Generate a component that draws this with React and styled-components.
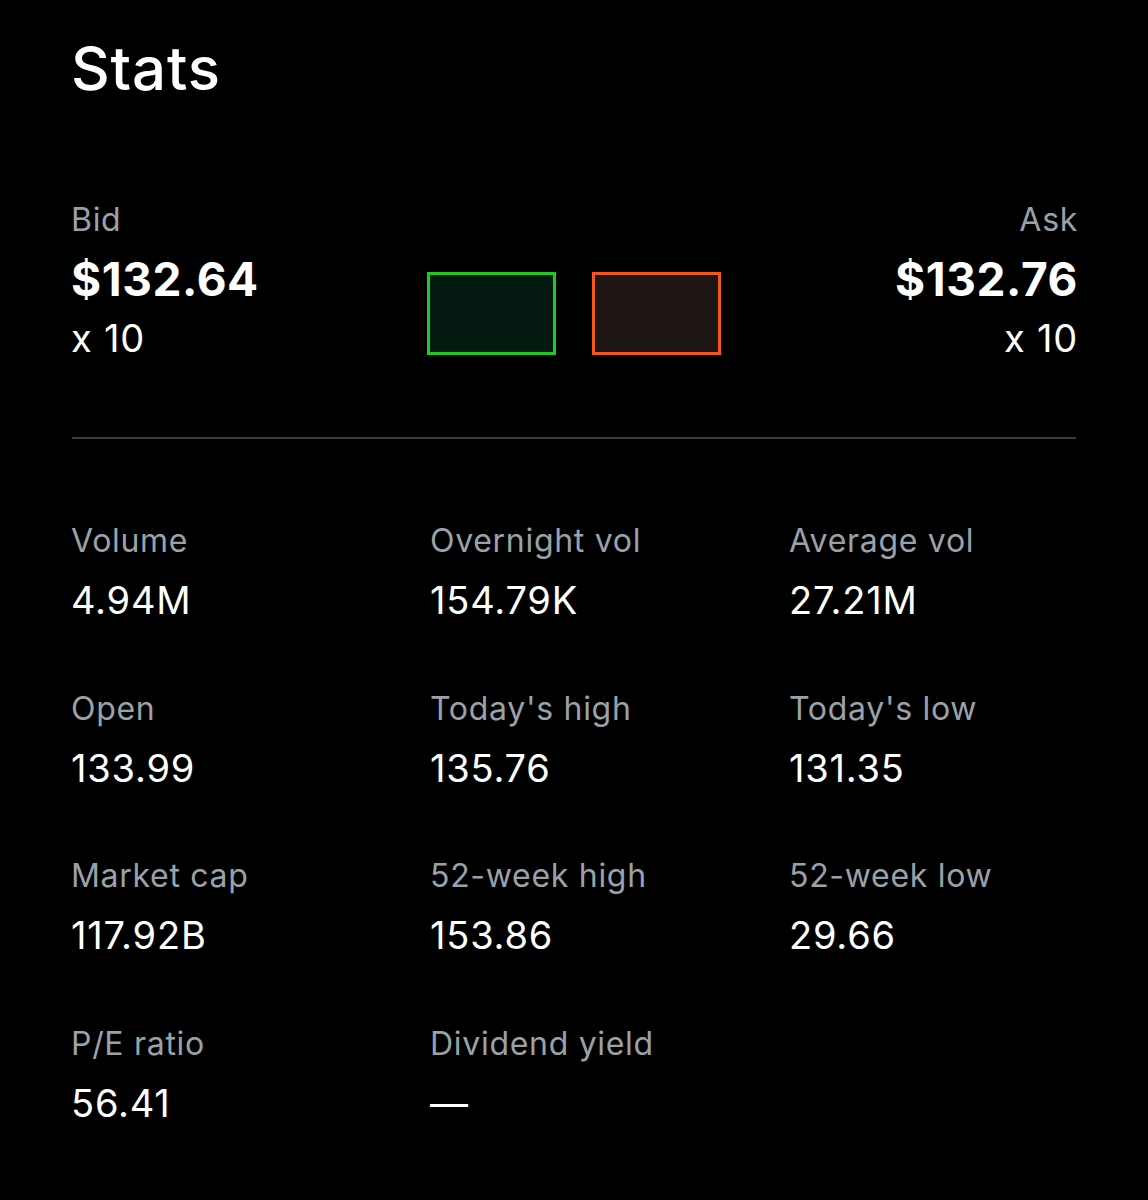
import React from "react";
import styled, { createGlobalStyle } from "styled-components";

const GlobalStyle = createGlobalStyle`
  body {
    margin: 0;
    background: #000;
    font-family: Inter, "Noto Sans", sans-serif;
    color: #fff;
  }
`;

const Page = styled.div`
  background: #000;
  min-height: 1200px;
  padding: 32px 72px 0 71px;
  box-sizing: border-box;
`;

const Title = styled.h1`
  margin: 0;
  font-size: 60px;
  line-height: 72px;
  font-weight: 500;
  letter-spacing: 0.8px;
  color: #fff;
`;

const Quote = styled.div`
  display: flex;
  justify-content: space-between;
  align-items: flex-end;
  margin-top: 96px;
`;

const Side = styled.div`
  display: flex;
  flex-direction: column;
  align-items: ${(p) => (p.$right ? "flex-end" : "flex-start")};
  margin-right: ${(p) => (p.$right ? "-2px" : "0")};
  width: 260px;
`;

const Label = styled.div`
  font-size: 32px;
  line-height: 40px;
  letter-spacing: 0.7px;
  color: #9ba2a7;
`;

const Price = styled.div`
  margin-top: 11px;
  font-size: 46px;
  line-height: 56px;
  font-weight: 700;
  letter-spacing: 0.6px;
`;

const Size = styled.div`
  margin-top: 8px;
  font-size: 38px;
  line-height: 46px;
  letter-spacing: 0.8px;
`;

const Boxes = styled.div`
  display: flex;
  gap: 36px;
  margin: 0 2px 6px 0;
`;

const Box = styled.div`
  width: 129px;
  height: 83px;
  box-sizing: border-box;
  border: 3px solid ${(p) => p.$border};
  background: ${(p) => p.$fill};
`;

const Divider = styled.hr`
  margin: 76px 0 0 1px;
  border: none;
  height: 2px;
  background: #3b3c43;
`;

const Grid = styled.div`
  display: grid;
  grid-template-columns: 359px 359px 1fr;
  row-gap: 65.5px;
  margin-top: 82px;
`;

const Cell = styled.div`
  display: flex;
  flex-direction: column;
  gap: 16px;
`;

const Value = styled.div`
  font-size: 38px;
  line-height: 46px;
  letter-spacing: 0.8px;
  color: #fff;
`;

const stats = [
  ["Volume", "4.94M"],
  ["Overnight vol", "154.79K"],
  ["Average vol", "27.21M"],
  ["Open", "133.99"],
  ["Today's high", "135.76"],
  ["Today's low", "131.35"],
  ["Market cap", "117.92B"],
  ["52-week high", "153.86"],
  ["52-week low", "29.66"],
  ["P/E ratio", "56.41"],
  ["Dividend yield", "—"],
];

export default function App() {
  return (
    <Page>
      <GlobalStyle />
      <Title>Stats</Title>
      <Quote>
        <Side>
          <Label>Bid</Label>
          <Price>$132.64</Price>
          <Size>x 10</Size>
        </Side>
        <Boxes>
          <Box $border="#22c922" $fill="#041a10" />
          <Box $border="#f2561d" $fill="#1d1614" />
        </Boxes>
        <Side $right>
          <Label>Ask</Label>
          <Price>$132.76</Price>
          <Size>x 10</Size>
        </Side>
      </Quote>
      <Divider />
      <Grid>
        {stats.map(([label, value]) => (
          <Cell key={label}>
            <Label>{label}</Label>
            <Value>{value}</Value>
          </Cell>
        ))}
      </Grid>
    </Page>
  );
}
